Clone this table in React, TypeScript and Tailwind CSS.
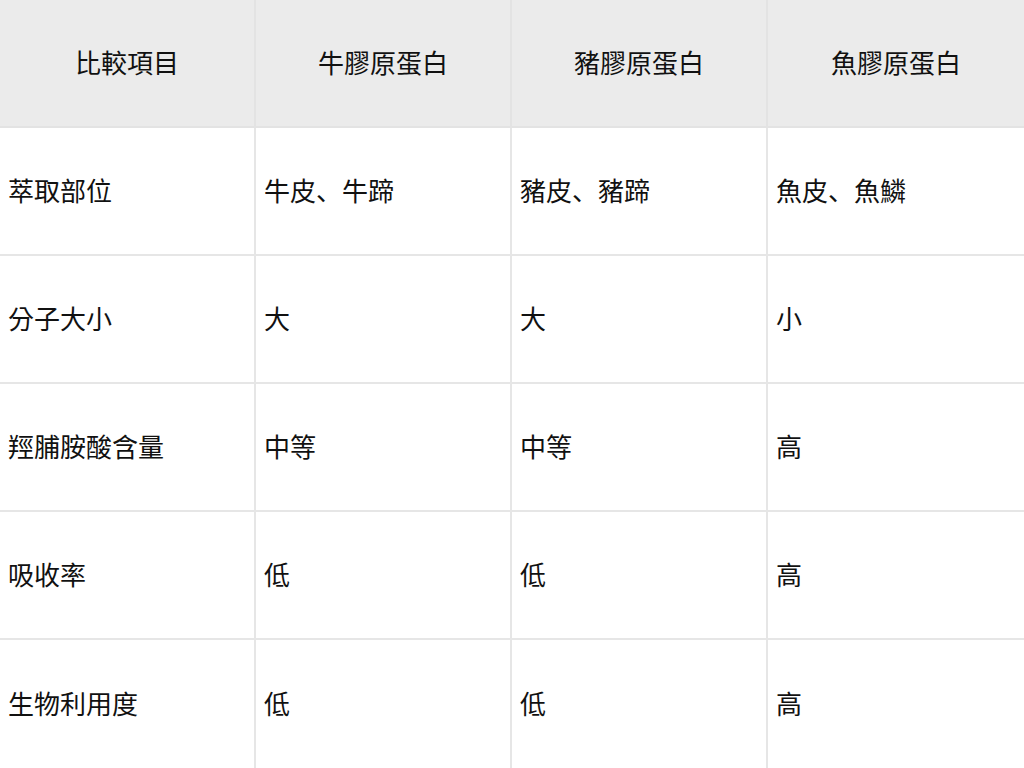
const headers = ["比較項目", "牛膠原蛋白", "豬膠原蛋白", "魚膠原蛋白"];

const rows = [
  ["萃取部位", "牛皮、牛蹄", "豬皮、豬蹄", "魚皮、魚鱗"],
  ["分子大小", "大", "大", "小"],
  ["羥脯胺酸含量", "中等", "中等", "高"],
  ["吸收率", "低", "低", "高"],
  ["生物利用度", "低", "低", "高"],
];

// the comma in the picture sits bottom-left, as in the SC face
function Cell({ text }: { text: string }) {
  const parts = text.split("、");
  return (
    <>
      {parts.map((p, i) => (
        <span key={i}>
          {p}
          {i < parts.length - 1 && (
            <span style={{ fontFamily: '"Noto Sans CJK SC", sans-serif' }}>、</span>
          )}
        </span>
      ))}
    </>
  );
}

export default function App() {
  return (
    <div
      className="h-[768px] w-[1024px] overflow-hidden bg-white text-[26px] text-[#111]"
      style={{ fontFamily: '"Noto Sans CJK TC", "Noto Sans", sans-serif' }}
    >
      <div className="grid grid-cols-4">
        {headers.map((h, i) => (
          <div
            key={h}
            className={`flex h-[128px] items-center justify-center border-b-2 border-[#e3e3e3] bg-[#ebebeb] pb-1 ${
              i < 3 ? "border-r-2" : ""
            }`}
          >
            {h}
          </div>
        ))}
        {rows.map((row, r) =>
          row.map((cell, i) => (
            <div
              key={`${r}-${i}`}
              className={`flex h-[128px] items-center whitespace-pre border-[#e6e6e6] px-2 pb-1 ${
                i < 3 ? "border-r-2" : ""
              } ${r < rows.length - 1 ? "border-b-2" : ""}`}
            >
              <Cell text={cell} />
            </div>
          ))
        )}
      </div>
    </div>
  );
}
